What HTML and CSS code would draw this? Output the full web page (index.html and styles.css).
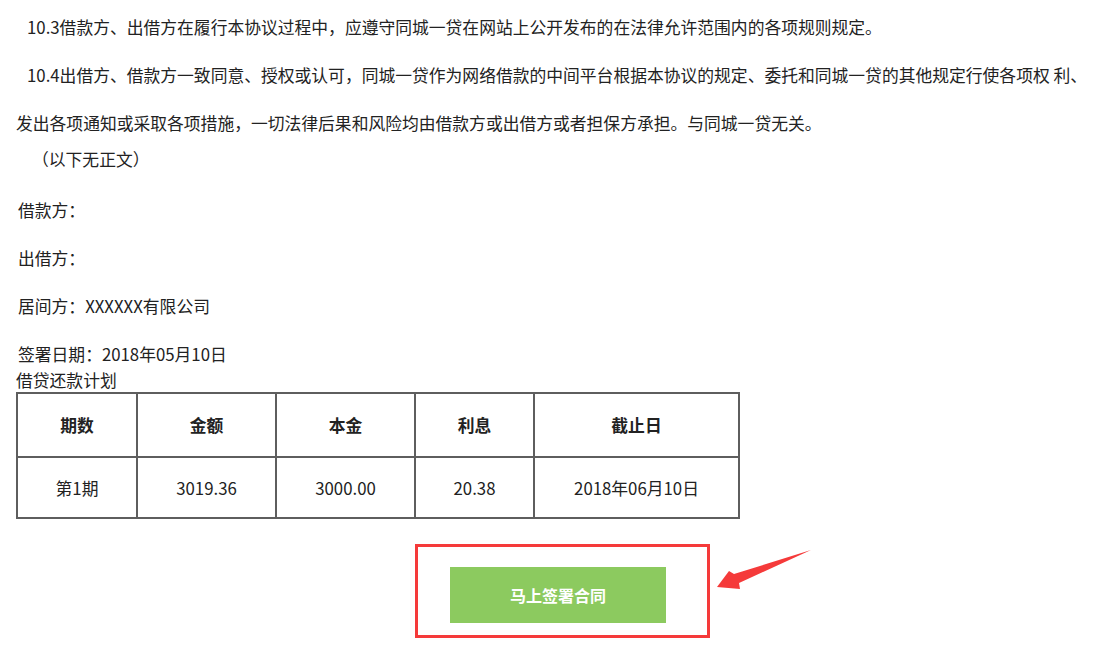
FILE: index.html
```html
<!DOCTYPE html>
<html lang="zh-CN">

<head>
  <meta charset="UTF-8">
  <meta name="viewport" content="width=device-width, initial-scale=1.0">
  <title>借款协议</title>
  <link rel="stylesheet" href="styles.css">
</head>

<body>
  <div class="doc">
    <p class="clause">10.3借款方、出借方在履行本协议过程中，应遵守同城一贷在网站上公开发布的在法律允许范围内的各项规则规定。</p>
    <p class="clause">10.4出借方、借款方一致同意、授权或认可，同城一贷作为网络借款的中间平台根据本协议的规定、委托和同城一贷的其他规定行使各项权 利、<br>发出各项通知或采取各项措施，一切法律后果和风险均由借款方或出借方或者担保方承担。与同城一贷无关。</p>
    <p class="end-note">（以下无正文）</p>

    <div class="parties">
      <p>借款方：</p>
      <p>出借方：</p>
      <p>居间方：XXXXXX有限公司</p>
      <p>签署日期：2018年05月10日</p>
    </div>

    <div class="plan-title">借贷还款计划</div>
    <table class="plan">
      <tr>
        <th class="col-1">期数</th>
        <th class="col-2">金额</th>
        <th class="col-3">本金</th>
        <th class="col-4">利息</th>
        <th class="col-5">截止日</th>
      </tr>
      <tr>
        <td>第1期</td>
        <td>3019.36</td>
        <td>3000.00</td>
        <td>20.38</td>
        <td>2018年06月10日</td>
      </tr>
    </table>

    <div class="sign-area">
      <div class="highlight">
        <button class="sign-btn">马上签署合同</button>
      </div>
      <!-- annotation arrow -->
      <svg class="arrow" width="98" height="44" viewBox="0 0 98 44">
        <polygon points="2,40 14,24 19,27 96,3 24,36 25,42" fill="#f53a3a" />
      </svg>
    </div>
  </div>
</body>

</html>
```

FILE: styles.css
```css
body {
  margin: 0;
  padding: 0;
  background: #fff;
  color: #222;
  font-family: "Noto Sans CJK SC", "Noto Sans", sans-serif;
  font-size: 16.8px;
}

.doc {
  padding: 3px 0 0 16px;
}

.doc p {
  margin: 0;
}

.clause {
  line-height: 48px;
  white-space: nowrap;
}

.clause:first-child,
.clause:nth-child(2) {
  text-indent: 11px;
}

.end-note {
  line-height: 24px;
  padding-left: 16px;
}

.parties {
  margin-top: 27px;
}

.parties p {
  line-height: 24px;
  margin-bottom: 24px !important;
  padding-left: 2px;
}

.parties p:last-child {
  margin-bottom: 2px !important;
}

.plan-title {
  line-height: 24px;
}

.plan {
  border-collapse: separate;
  border-spacing: 0;
  border: 1px solid #5e5e5e;
  text-align: center;
}

.plan th,
.plan td {
  border: 1px solid #5e5e5e;
  padding: 0;
}

.plan th {
  height: 62px;
  font-weight: bold;
}

.plan td {
  height: 59px;
}

.col-1 { width: 118px; }
.col-2 { width: 137px; }
.col-3 { width: 137px; }
.col-4 { width: 117px; }
.col-5 { width: 203px; }

.sign-area {
  position: relative;
  margin-top: 25px;
  margin-left: 399px;
}

.highlight {
  width: 289px;
  height: 88px;
  border: 3px solid #f53a3a;
}

.sign-btn {
  display: block;
  margin: 20px 0 0 32px;
  width: 216px;
  height: 56px;
  border: none;
  background: #8cca5f;
  color: #fff;
  font-family: "Noto Sans CJK SC", sans-serif;
  font-size: 16px;
  font-weight: bold;
  cursor: pointer;
}

.arrow {
  position: absolute;
  left: 300px;
  top: 3px;
}
```
